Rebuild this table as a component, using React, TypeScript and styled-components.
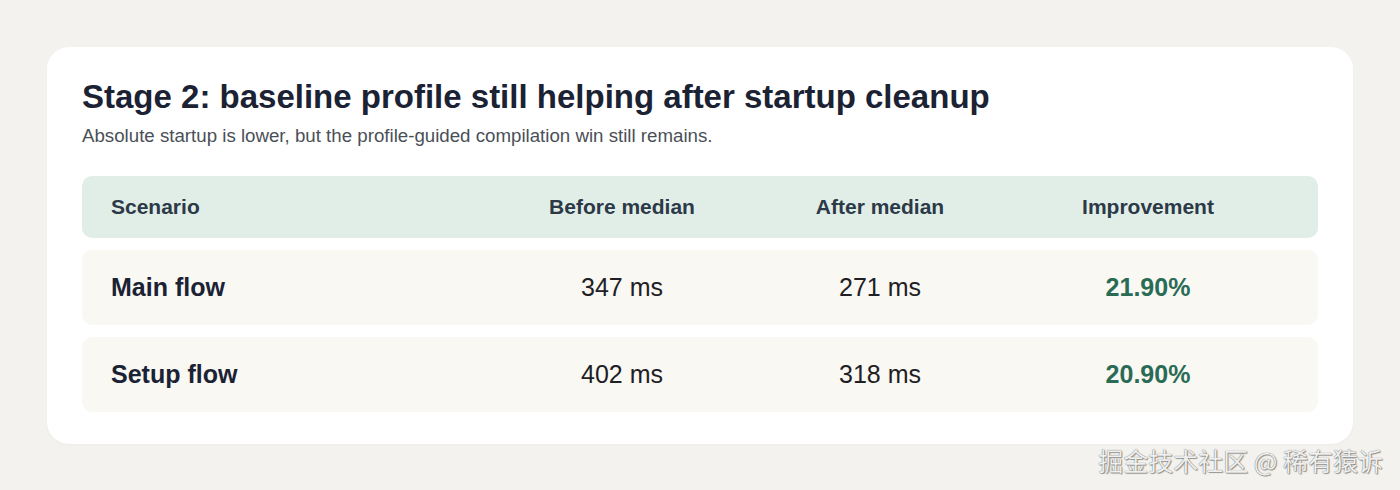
import styled, { createGlobalStyle } from "styled-components";

const GlobalStyle = createGlobalStyle`
  html, body {
    margin: 0;
    padding: 0;
    background: #f3f2ee;
  }
  * {
    box-sizing: border-box;
  }
`;

const Page = styled.div`
  position: relative;
  width: 1400px;
  height: 490px;
  padding: 47px;
  font-family: "Liberation Sans", Arial, sans-serif;
`;

const Card = styled.section`
  background: #ffffff;
  border-radius: 22px;
  padding: 30px 35px 32px;
  box-shadow: 0 1px 3px rgba(0, 0, 0, 0.03);
`;

const Title = styled.h1`
  margin: 0;
  font-size: 33px;
  line-height: 40px;
  font-weight: 700;
  color: #1b2233;
`;

const Subtitle = styled.p`
  margin: 7px 0 28px;
  font-size: 18.7px;
  line-height: 24px;
  color: #4a4f57;
`;

const Table = styled.div`
  display: flex;
  flex-direction: column;
  gap: 12px;
`;

const Row = styled.div<{ $head?: boolean }>`
  display: grid;
  grid-template-columns: 389px 244px 272px 1fr;
  align-items: center;
  height: ${(p) => (p.$head ? "62px" : "75px")};
  padding: 0 38px 0 29px;
  border-radius: 10px;
  background: ${(p) => (p.$head ? "#e1eee8" : "#f9f8f3")};
`;

const HeadCell = styled.div<{ $left?: boolean }>`
  font-size: 21px;
  font-weight: 700;
  color: #2c3947;
  text-align: ${(p) => (p.$left ? "left" : "center")};
`;

const Label = styled.div`
  font-size: 25px;
  font-weight: 700;
  color: #1b2233;
`;

const Value = styled.div`
  font-size: 25px;
  color: #1e2024;
  text-align: center;
`;

const Gain = styled.div`
  font-size: 25px;
  font-weight: 700;
  color: #2a6b55;
  text-align: center;
`;

const Watermark = styled.div`
  position: absolute;
  right: 17px;
  bottom: 15px;
  font-family: "Noto Sans CJK SC", "Liberation Sans", sans-serif;
  font-size: 25px;
  line-height: 30px;
  color: rgba(250, 250, 250, 0.95);
  text-shadow: 0 0 1px rgba(60, 60, 60, 0.9), 1px 1px 1px rgba(0, 0, 0, 0.35);
`;

const rows = [
  { name: "Main flow", before: "347 ms", after: "271 ms", gain: "21.90%" },
  { name: "Setup flow", before: "402 ms", after: "318 ms", gain: "20.90%" },
];

export default function App() {
  return (
    <Page>
      <GlobalStyle />
      <Card>
        <Title>Stage 2: baseline profile still helping after startup cleanup</Title>
        <Subtitle>
          Absolute startup is lower, but the profile-guided compilation win still remains.
        </Subtitle>
        <Table>
          <Row $head>
            <HeadCell $left>Scenario</HeadCell>
            <HeadCell>Before median</HeadCell>
            <HeadCell>After median</HeadCell>
            <HeadCell>Improvement</HeadCell>
          </Row>
          {rows.map((r) => (
            <Row key={r.name}>
              <Label>{r.name}</Label>
              <Value>{r.before}</Value>
              <Value>{r.after}</Value>
              <Gain>{r.gain}</Gain>
            </Row>
          ))}
        </Table>
      </Card>
      <Watermark>掘金技术社区 @ 稀有猿诉</Watermark>
    </Page>
  );
}
